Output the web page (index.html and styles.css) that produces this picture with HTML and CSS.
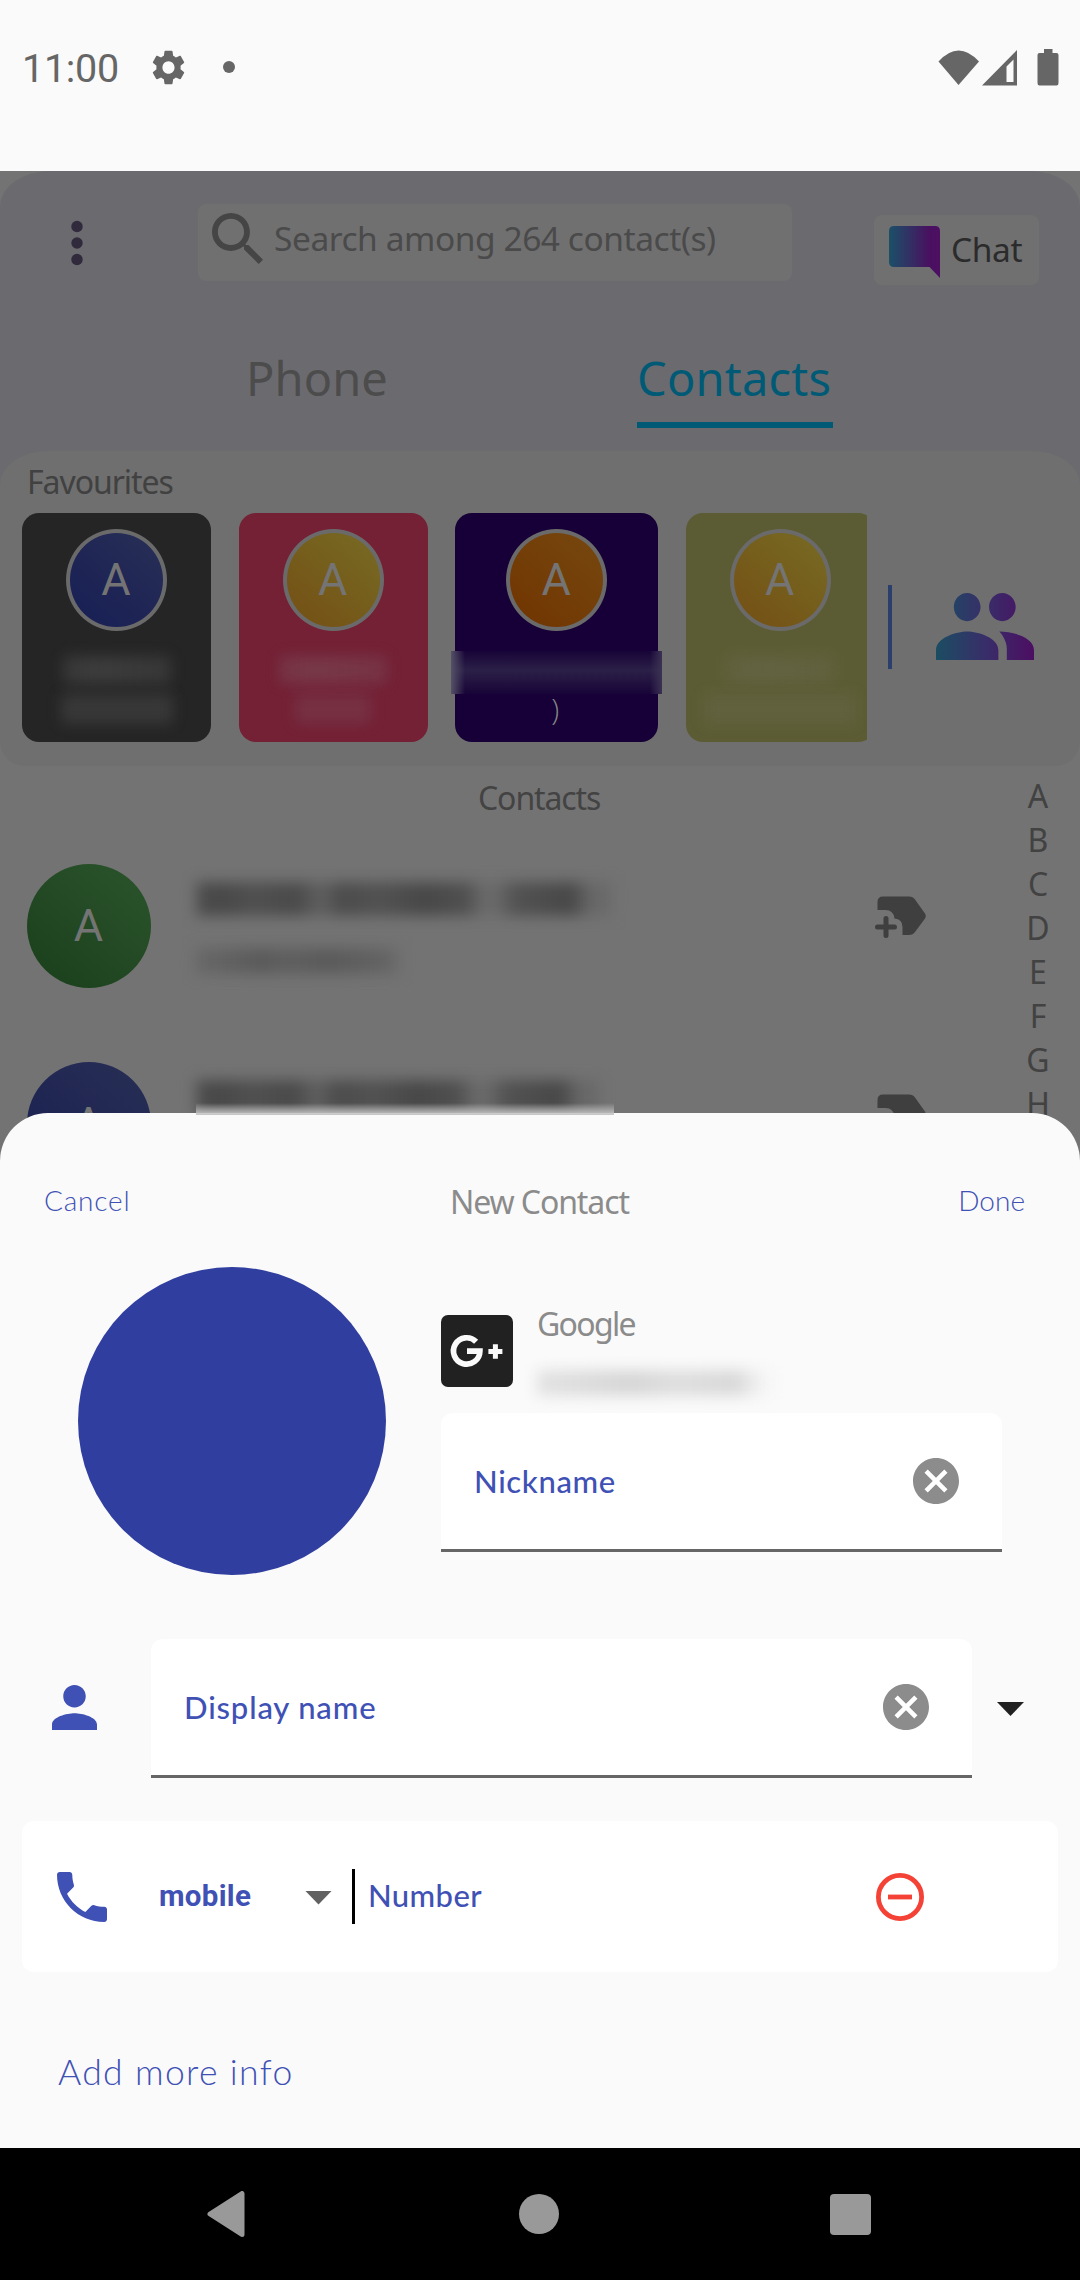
FILE: index.html
```html
<!DOCTYPE html>
<html lang="en">
<head>
<meta charset="utf-8">
<title>New Contact</title>
<link rel="stylesheet" href="styles.css">
</head>
<body>
<svg class="defs" width="0" height="0" aria-hidden="true">
  <defs>
    <linearGradient id="brand" x1="0" y1="0" x2="1" y2="0">
      <stop offset="0" stop-color="#1b5068"/><stop offset=".5" stop-color="#382863"/><stop offset=".8" stop-color="#4a1060"/><stop offset="1" stop-color="#4d0f62"/>
    </linearGradient>
    <linearGradient id="people" gradientUnits="userSpaceOnUse" x1="1" y1="0" x2="23" y2="0">
      <stop offset="0" stop-color="#1b4d62"/><stop offset=".5" stop-color="#382e69"/><stop offset="1" stop-color="#4c0e62"/>
    </linearGradient>
    <symbol id="label-add" viewBox="0 0 51 42">
      <path d="M2.500 14V6Q2.500 0.500 8 0.500H34Q38 .5 40 3.500L50 17.500Q51.500 20 50 22.500L40 36Q38 39 34 39H27.500V31Q27.500 23 19.500 22.500Q18.500 14 10.500 14Z"/>
      <path d="M11 22.500V39.500M2.500 31H19.500" fill="none" stroke="#3f3f3f" stroke-width="5" stroke-linecap="round"/>
    </symbol>
    <symbol id="clear" viewBox="2 2 20 20">
      <path d="M12 2C6.470 2 2 6.470 2 12s4.470 10 10 10 10-4.470 10-10S17.530 2 12 2zm5 13.590L15.590 17 12 13.410 8.410 17 7 15.590 10.590 12 7 8.410 8.410 7 12 10.590 15.590 7 17 8.410 13.410 12 17 15.590z"/>
    </symbol>
  </defs>
</svg>

<div class="status">
  <span class="clock">11:00</span>
  <svg class="gear" viewBox="2.200 2 19.600 20" preserveAspectRatio="none"><path d="M19.140 12.940c.04-.3.060-.61.060-.94 0-.32-.02-.64-.07-.94l2.030-1.580c.18-.14.230-.41.120-.61l-1.920-3.320c-.12-.22-.37-.29-.59-.22l-2.390.960c-.5-.38-1.030-.7-1.620-.94l-.36-2.540c-.04-.24-.24-.41-.48-.41h-3.840c-.24 0-.43.170-.47.410l-.36 2.540c-.59.240-1.130.570-1.620.940l-2.390-.96c-.22-.08-.47 0-.59.220L2.740 8.870c-.12.210-.08.470.120.610l2.030 1.580c-.05.300-.09.630-.09.940s.02.640.070.940l-2.030 1.580c-.18.140-.23.410-.12.610l1.920 3.320c.12.220.37.290.59.220l2.390-.96c.5.380 1.030.700 1.620.940l.36 2.540c.05.240.24.410.48.410h3.840c.24 0 .44-.17.470-.41l.36-2.540c.59-.24 1.130-.56 1.620-.94l2.390.960c.22.080.47 0 .59-.22l1.920-3.320c.12-.22.070-.47-.12-.61l-2.010-1.580zM12 15.600c-1.980 0-3.600-1.620-3.600-3.600s1.620-3.600 3.600-3.600 3.600 1.620 3.600 3.600-1.620 3.600-3.600 3.600z"/></svg>
  <i class="notice"></i>
  <svg class="signals" viewBox="0 0 121 37">
    <path d="M0.500 12.500Q20.500-9.500 41 12.500L20.500 36Z"/>
    <path fill-rule="evenodd" d="M79 1V36.500H44ZM75.500 10.500L68.500 17.500V33H75.500Z"/>
    <path d="M106 0H114.500V4H118.500Q120.500 4 120.500 6V34Q120.500 36.500 118.500 36.500H101.500Q99.500 36.500 99.500 34V6Q99.500 4 101.500 4H106Z"/>
  </svg>
</div>

<main class="app">
  <header class="top">
    <div class="tools">
      <svg class="more" viewBox="0 0 12 46"><circle cx="6" cy="6.500" r="5.700"/><circle cx="6" cy="23" r="5.700"/><circle cx="6" cy="39.500" r="5.700"/></svg>
      <div class="search">
        <svg viewBox="3 3 17.490 17.490"><path d="M15.500 14h-.79l-.28-.27C15.410 12.590 16 11.110 16 9.500 16 5.910 13.090 3 9.500 3S3 5.910 3 9.500 5.910 16 9.500 16c1.610 0 3.090-.59 4.230-1.570l.27.280v.79l5 4.990L20.490 19l-4.990-5zm-6 0C7.010 14 5 11.990 5 9.500S7.010 5 9.500 5 14 7.010 14 9.500 11.990 14 9.500 14z"/></svg>
        <span>Search among 264 contact(s)</span>
      </div>
      <div class="chat">
        <svg viewBox="0 0 51 52"><path fill="url(#brand)" d="M5 0H46Q51 0 51 5V52L40.500 41H5Q0 41 0 36V5Q0 0 5 0Z"/></svg>
        <span>Chat</span>
      </div>
    </div>
    <nav class="tabs"><span class="tab">Phone</span><span class="tab active">Contacts</span></nav>
  </header>

  <div class="panel-back">
  <section class="favourites">
    <h2>Favourites</h2>
    <div class="fav-row">
      <div class="cards">
        <div class="card dark"><b class="avatar blue">A</b><i class="mask m1"></i><i class="mask m2"></i></div>
        <div class="card pink"><b class="avatar yellow">A</b><i class="mask m1"></i><i class="mask m3"></i></div>
        <div class="card violet"><b class="avatar orange">A</b><i class="band"></i><span class="paren">)</span></div>
        <div class="card olive"><b class="avatar yellow">A</b><i class="mask m1"></i><i class="mask m4"></i></div>
      </div>
      <i class="rule"></i>
      <svg class="people" viewBox="1 5 22 14.500" preserveAspectRatio="none"><path fill="url(#people)" d="M15.900 11c1.650 0 2.990-1.400 2.990-3S17.550 5 15.900 5s-3 1.340-3 3 1.340 3 3 3zM8 11c1.660 0 3-1.400 3-3S9.660 5 8 5 5 6.340 5 8s1.340 3 3 3zm0 2.200c-2.330 0-7 1.300-7 4V19.300h14v-2.100c0-2.700-4.670-4-7-4zm7.200 0c1 1 1.700 2.400 1.700 3.700v2.400H23v-2.100c0-2.700-4.600-4-7.800-4z"/></svg>
    </div>
  </section>
  </div>

  <section class="contacts">
    <div class="list">
      <h2>Contacts</h2>
      <div class="row">
        <b class="face green">A</b>
        <div class="who"><i class="mask name"></i><i class="mask phone"></i></div>
        <svg class="add"><use href="#label-add"/></svg>
      </div>
      <div class="row">
        <b class="face indigo">A</b>
        <div class="who"><i class="mask name short"></i></div>
        <svg class="add"><use href="#label-add"/></svg>
      </div>
    </div>
    <ul class="index"><li>A</li><li>B</li><li>C</li><li>D</li><li>E</li><li>F</li><li>G</li><li>H</li></ul>
  </section>
</main>

<section class="sheet">
  <i class="edge"></i>
  <div class="bar"><a class="cancel">Cancel</a><h1>New Contact</h1><a class="done">Done</a></div>
  <div class="profile">
    <div class="photo"></div>
    <div class="details">
      <div class="account">
        <svg class="gplus" viewBox="0 0 72 72"><rect width="72" height="72" rx="7" fill="#212121"/><path d="M35.100 26.700A13.200 13.200 0 1 0 38.900 36.200H26" fill="none" stroke="#fafafa" stroke-width="5.700"/><path d="M54.400 29.300V43.700M47.400 36.500H61.400" stroke="#fafafa" stroke-width="5"/></svg>
        <div class="account-text"><span>Google</span><i class="mask mail"></i></div>
      </div>
      <div class="field nick"><span>Nickname</span><svg class="clear"><use href="#clear"/></svg></div>
    </div>
  </div>
  <div class="display">
    <svg class="person" viewBox="4 4 16 16"><path d="M12 12c2.210 0 4-1.790 4-4s-1.790-4-4-4-4 1.790-4 4 1.790 4 4 4zm0 2c-2.670 0-8 1.340-8 4v2h16v-2c0-2.660-5.330-4-8-4z"/></svg>
    <div class="field full"><span>Display name</span><svg class="clear"><use href="#clear"/></svg></div>
    <i class="caret"></i>
  </div>
  <div class="number">
    <svg class="handset" viewBox="3 3 18 18"><path d="M6.620 10.790c1.440 2.830 3.760 5.140 6.590 6.590l2.200-2.200c.27-.27.670-.36 1.020-.24 1.120.370 2.330.570 3.570.570.550 0 1 .45 1 1V20c0 .55-.45 1-1 1-9.390 0-17-7.610-17-17 0-.55.450-1 1-1h3.500c.55 0 1 .45 1 1 0 1.250.200 2.450.570 3.570.110.350.030.740-.25 1.020l-2.200 2.200z"/></svg>
    <span class="kind">mobile</span>
    <i class="caret grey"></i>
    <i class="cursor"></i>
    <span class="hint">Number</span>
    <svg class="remove" viewBox="0 0 48 48"><circle cx="24" cy="24" r="21.600"/><path d="M12 24H36"/></svg>
  </div>
  <a class="more-info">Add more info</a>
</section>

<nav class="system">
  <svg viewBox="0 0 38 46"><path d="M35 2.500V43.500L3 23Z" stroke-width="5" stroke="#999" stroke-linejoin="round"/></svg>
  <i class="home"></i>
  <i class="recent"></i>
</nav>
</body>
</html>
```
FILE: styles.css
```css
* { box-sizing: border-box; }
body { margin: 0; width: 1080px; height: 2280px; overflow: hidden; display: flex; flex-direction: column; background: #fafafa; font-family: "Noto Sans", sans-serif; }
h1, h2, ul { margin: 0; padding: 0; font-weight: 400; list-style: none; }
i, b { font-style: normal; font-weight: 400; display: block; flex: none; }
svg { display: block; flex: none; }
span, a { white-space: nowrap; }
.defs { position: absolute; }

/* Status bar */
.status { flex: none; height: 171px; padding: 49px 21px 0 22px; display: flex; align-items: flex-start; fill: #666; }
.clock { width: 130px; font: 400 39.500px/40px Roboto, sans-serif; color: #666; letter-spacing: -.3px; }
.gear { width: 33px; height: 35px; margin-top: 1px; }
.notice { width: 12px; height: 12px; margin: 12px 0 0 38px; border-radius: 50%; background: #666; }
.signals { width: 121px; height: 37px; margin-left: auto; }

/* Dimmed contacts screen */
.app { flex: none; height: 990px; overflow: hidden; background: #737373; }
.top { height: 280px; background: #6b6a6f; border-radius: 50px 50px 0 0 / 36px 36px 0 0; }
.tools { display: flex; align-items: flex-start; padding: 33px 41px 0 71px; }
.more { width: 12px; height: 46px; margin-top: 16px; fill: #302a3c; }
.search { display: flex; width: 594px; height: 77px; margin-left: 115px; padding: 9px 14px; border-radius: 8px; background: #707071; }
.search svg { width: 51px; height: 51px; fill: #454545; }
.search span { margin-left: 11px; font-size: 33.500px; line-height: 50px; letter-spacing: -.44px; color: #4a4a4a; }
.chat { display: flex; width: 165px; height: 70px; margin: 11px 0 0 auto; padding: 11px 15px; border-radius: 8px; background: #707071; }
.chat svg { width: 51px; height: 52px; }
.chat span { margin-left: 11px; font-size: 33.500px; line-height: 46px; color: #2b2b2b; letter-spacing: -.4px; }
.tabs { display: flex; padding-left: 246px; }
.tab { height: 80px; margin-top: 63px; width: 391px; font-size: 47px; line-height: 60px; color: #4c4c4c; letter-spacing: .1px; }
.tab.active { width: 196px; border-bottom: 6px solid #005a75; color: #005a75; letter-spacing: .2px; }

.panel-back { height: 315px; background: linear-gradient(#6b6a6f 60px, #737373 60px); }
.favourites { height: 315px; border-radius: 48px 48px 25px 25px / 34px 34px 25px 25px; background: #6f6f6f; }
.favourites h2 { height: 62px; padding: 9px 0 0 27px; font-size: 32px; line-height: 44px; letter-spacing: -1.050px; color: #414141; }
.fav-row { display: flex; padding-left: 22px; }
.cards { display: flex; gap: 27.600px; width: 845px; height: 229px; overflow-x: clip; }
.card { flex: none; width: 189px; height: 229px; padding-top: 16px; border-radius: 17px; display: flex; flex-direction: column; align-items: center; }
.dark { background: #252525; }
.pink { background: #742035; }
.violet { width: 203px; background: #160037; }
.olive { background: #5c5c34; }
.avatar { width: 101px; height: 102px; border: 4px solid #6b6a6b; border-radius: 50%; font: 400 45px/94px Roboto, sans-serif; text-align: center; text-indent: -1px; color: #747474; }
.blue { background: linear-gradient(40deg, #171e55, #282f55); }
.yellow { background: linear-gradient(40deg, #744f14, #776b24); }
.orange { background: linear-gradient(40deg, #713401, #76480f); }
.rule { width: 4px; height: 84px; margin: 72px 44px 0 21px; background: #2a3f6c; }
.people { width: 98px; height: 68px; margin-top: 80px; }
.paren { margin-left: -3px; font: 300 29px/30px "Open Sans", sans-serif; color: #858585; }

/* Obscured personal details */
.mask { filter: blur(7px); }
.m1 { width: 108px; height: 28px; margin: 25px 0 10px; background: linear-gradient(90deg, rgba(128,128,128,.2), rgba(128,128,128,.26) 30%, rgba(128,128,128,.2)); }
.m2 { width: 112px; height: 30px; background: rgba(128,128,128,.2); }
.m3 { width: 76px; height: 30px; background: rgba(128,128,128,.17); }
.m4 { width: 152px; height: 30px; background: rgba(128,128,128,.14); }
.olive .m1 { opacity: .7; }
.band { width: 211px; height: 43px; margin-top: 20px; background: linear-gradient(90deg, #555166, transparent 14px calc(100% - 12px), #3b3253), linear-gradient(#180438, #2b2047 45%, #180438); }
.name { width: 416px; height: 34px; background: linear-gradient(90deg, #505050, #484848 5%, #505050 14%, #4a4a4a 24%, #606060 30%, #4c4c4c 35%, #525252 44%, #484848 55%, #505050 65%, #6a6a6a 69% 72%, #525252 77%, #484848 90%, #686868 95%, #6a6a6a); }
.phone { width: 204px; height: 26px; margin-top: 32px; background: linear-gradient(90deg, #686868, #5a5a5a 32%, #5f5f5f 45%, #5a5a5a 65%, #626262 90%, #6c6c6c); }
.name.short { width: 404px; }
.edge { position: absolute; left: 196px; top: -10px; width: 418px; height: 12px; background: linear-gradient(rgba(190,190,190,0), #c4c4c4); }

.contacts { display: flex; justify-content: space-between; }
.list { width: 926px; }
.list h2 { height: 97px; padding: 10px 0 0 478px; font-size: 32px; line-height: 44px; letter-spacing: -1.100px; color: #434343; }
.row { display: flex; height: 198px; padding-left: 27px; }
.face { width: 124px; height: 124px; margin-top: 1px; border-radius: 50%; font: 400 45px/124px Roboto, sans-serif; text-align: center; text-indent: -1px; color: #747474; }
.green { background: linear-gradient(40deg, #1a3f1b, #2b542c); }
.indigo { background: linear-gradient(40deg, #191f50, #282f55); }
.who { width: 724px; padding: 19px 0 0 45px; }
.add { width: 51px; height: 42px; margin-top: 33px; fill: #3f3f3f; }
.index { width: 52px; margin-right: 16px; padding-top: 8px; font-size: 32px; line-height: 44px; text-align: center; color: #424242; }

/* New contact sheet */
.sheet { position: relative; flex: none; height: 1035px; margin-top: -48px; border-radius: 48px 48px 0 0; background: #fafafa; color: #3f51b5; font-family: Lato, sans-serif; }
.bar { display: flex; height: 154px; padding: 65px 55px 0 44px; font-size: 28px; line-height: 44px; font-weight: 300; }
.cancel { width: 406px; letter-spacing: .8px; }
.done { margin-left: auto; }
.bar h1 { font: 400 32px/48px "Noto Sans", sans-serif; letter-spacing: -1.100px; color: #8b8b8b; }
.profile { display: flex; padding-left: 78px; height: 372px; }
.photo { width: 308px; height: 308px; border-radius: 50%; background: #303f9f; }
.details { width: 561px; margin-left: 55px; padding-top: 33px; }
.account { display: flex; height: 113px; padding-top: 15px; }
.gplus { width: 72px; height: 72px; }
.account-text { margin: -13px 0 0 24px; }
.account-text span { display: block; height: 56px; font: 400 32px/44px "Noto Sans", sans-serif; letter-spacing: -1.700px; color: #8b8b8b; }
.mail { width: 234px; height: 26px; margin-top: 12px; background: linear-gradient(90deg, #e2e2e2, #d6d6d6 40%, #dedede 60%, #d8d8d8 85%, #f4f4f4 96%); }
.field { display: flex; align-items: center; justify-content: space-between; height: 139px; padding: 0 43px 0 33px; border-bottom: 3px solid #666; background: #fff; font-size: 31px; font-weight: 500; clip-path: inset(0 round 12px 12px 0 0); }
.nick { letter-spacing: .65px; }
.full { width: 821px; letter-spacing: .85px; }
.clear { width: 46px; height: 46px; fill: #8c8c8c; }
.display { display: flex; align-items: flex-start; padding-left: 52px; height: 182px; }
.person { width: 45px; height: 45px; margin: 46px 54px 0 0; fill: #3f51b5; }
.caret { width: 27px; height: 14px; margin: 63px 0 0 25px; background: #212121; clip-path: polygon(0 0, 100% 0, 50% 100%); }
.number { display: flex; align-items: center; height: 151px; margin: 0 22px; padding-left: 35px; border-radius: 12px; background: #fff; }
.handset { width: 50px; height: 50px; fill: #3f51b5; }
.kind { width: 146px; margin: -2px 0 0 52px; font: 700 29.500px/40px Roboto, sans-serif; letter-spacing: .3px; }
.caret.grey { margin: 2px 0 0; background: #616161; }
.cursor { width: 3px; height: 55px; margin-left: 20px; background: #000; }
.hint { width: 508px; margin: -4px 0 0 13px; font-size: 31px; font-weight: 500; letter-spacing: .4px; }
.remove { width: 48px; height: 48px; fill: none; stroke: #f44336; stroke-width: 4.800; }
.more-info { display: block; padding: 76px 0 0 58px; font-size: 35.500px; line-height: 48px; font-weight: 300; letter-spacing: 1.350px; }

.system { flex: none; height: 132px; padding: 0 209px 0 207px; display: flex; align-items: center; justify-content: space-between; background: #000; fill: #999; }
.system svg { width: 38px; height: 46px; }
.home { width: 40px; height: 40px; margin-left: 3px; border-radius: 50%; background: #999; }
.recent { width: 41px; height: 41px; border-radius: 4px; background: #999; }
```
